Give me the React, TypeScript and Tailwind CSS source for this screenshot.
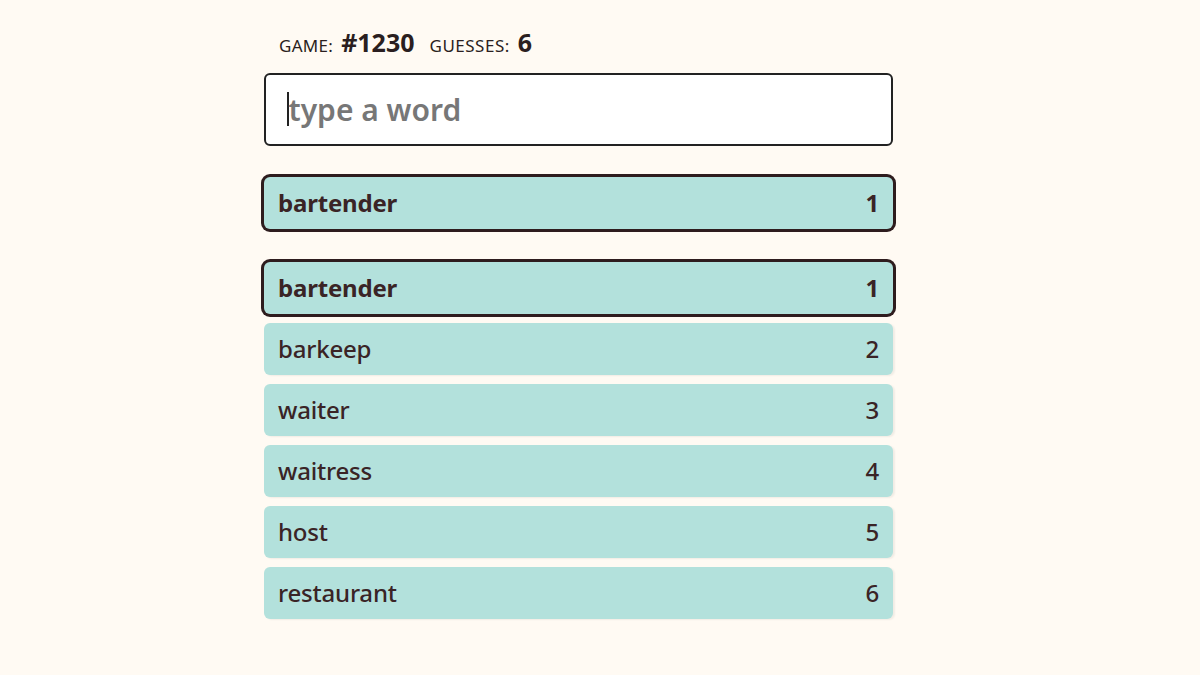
import React from 'react';

const guesses = [
  { word: 'bartender', rank: 1 },
  { word: 'barkeep', rank: 2 },
  { word: 'waiter', rank: 3 },
  { word: 'waitress', rank: 4 },
  { word: 'host', rank: 5 },
  { word: 'restaurant', rank: 6 },
];

const font = { fontFamily: '"Noto Sans", "Open Sans", sans-serif' };

function Row({ word, rank, active }: { word: string; rank: number; active?: boolean }) {
  return (
    <div
      className={
        'flex h-[52px] items-center justify-between rounded-md bg-[#b3e1dc] px-[14px] text-[24px] tracking-[-0.2px] text-[#3a2426] ' +
        (active ? 'font-bold ring-[3px] ring-[#2e1c1e] rounded-lg' : 'font-medium shadow-[2px_1px_2px_rgba(0,0,0,0.06)]')
      }
    >
      <span>{word}</span>
      <span>{rank}</span>
    </div>
  );
}

export default function App() {
  return (
    <div className="min-h-[675px] w-full bg-[#fffaf3]" style={font}>
      <div className="ml-[264px] w-[629px] pt-[24px]">
        <div className="flex items-baseline pl-[15px] text-[#2a1e20]">
          <span className="text-[17px] uppercase tracking-[0.3px]">Game:</span>
          <span className="ml-[8px] text-[25px] font-bold">#1230</span>
          <span className="ml-[15px] text-[17px] uppercase tracking-[0.5px]">Guesses:</span>
          <span className="ml-[8px] text-[25px] font-bold">6</span>
        </div>
        <div className="mt-[11px] flex h-[73px] items-center rounded-md border-2 border-[#222] bg-white pl-[21px]">
          <div className="h-[34px] w-[1.5px] bg-[#222]" />
          <span className="text-[30px] font-semibold text-[#777]">type a word</span>
        </div>
        <div className="mt-[31px]">
          <Row word="bartender" rank={1} active />
        </div>
        <div className="mt-[33px] flex flex-col gap-[9px]">
          {guesses.map((g) => (
            <Row key={g.word} word={g.word} rank={g.rank} active={g.rank === 1} />
          ))}
        </div>
      </div>
    </div>
  );
}
